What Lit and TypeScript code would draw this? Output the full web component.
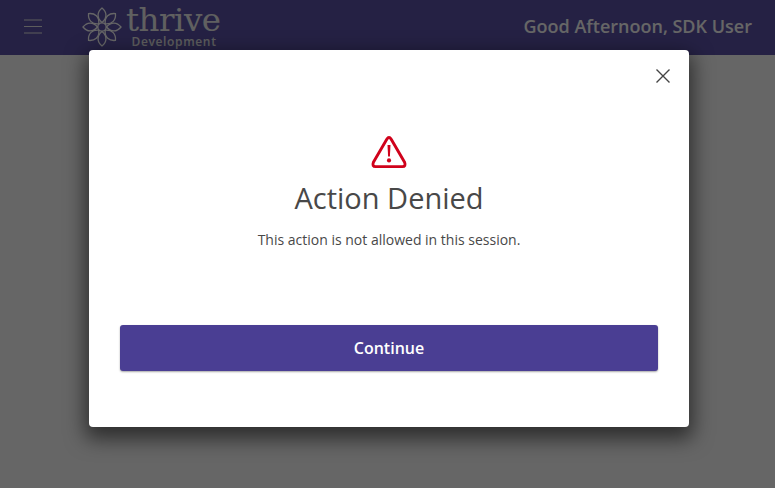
import { LitElement, html, svg, css } from "lit";
import { customElement } from "lit/decorators.js";

@customElement("app-root")
export class AppRoot extends LitElement {
  static styles = css`
    :host { display: block; width: 775px; height: 488px; position: relative; overflow: hidden; background: #fff; font-family: "Open Sans", sans-serif; }
    .header { height: 55px; background: #5c53aa; display: flex; align-items: center; padding: 0 23px 0 24px; box-sizing: border-box; color: #fff; }
    .menu { display: block; width: 18px; height: 16px; margin-right: 40px; margin-top: -3px; }
    .logo { display: flex; align-items: flex-start; height: 55px; }
    .flower { display: block; width: 40px; height: 40px; margin-top: 7px; }
    .brand { display: flex; flex-direction: column; align-items: flex-end; margin-left: 4px; }
    .word { font-family: "DejaVu Serif", serif; font-size: 32.5px; line-height: 32px; margin-top: 4px; letter-spacing: -0.5px; font-weight: 400; color: #f0f0f0; }
    .sub { font-size: 12px; line-height: 12px; letter-spacing: 0.65px; font-weight: 600; margin-top: 0; margin-right: 4px; color: #e8e8e8; }
    .greet { margin-left: auto; font-size: 18px; font-weight: 600; margin-top: -3px; }
    .backdrop { position: absolute; inset: 0; background: rgba(0,0,0,.6); display: flex; justify-content: center; align-items: flex-start; padding: 50px 0 0 3px; box-sizing: border-box; }
    .modal { width: 600px; height: 377px; background: #fff; border-radius: 4px; box-shadow: 0 8px 20px 4px rgba(0,0,0,.55); padding: 0 31px; box-sizing: border-box; display: flex; flex-direction: column; align-items: center; color: #444; position: relative; }
    .close { position: absolute; top: 19px; right: 19px; width: 14px; height: 14px; display: block; }
    .warn { display: block; width: 36px; height: 34px; margin-top: 85px; }
    h1 { font-size: 29px; font-weight: 400; line-height: 38px; margin: 10px 0 0; color: #484848; }
    p { font-size: 14px; line-height: 20px; margin: 13px 0 0; color: #484848; }
    button { margin-top: 75px; width: 538px; height: 46px; border: 0; border-radius: 3px; background: #4a3e93; color: #fff; font: 600 16px "Open Sans", sans-serif; box-shadow: 0 1px 2px rgba(0,0,0,.35); padding: 0; }
  `;

  render() {
    const petals = [0, 45, 90, 135, 180, 225, 270, 315];
    return html`
      <div class="header">
        <svg class="menu" viewBox="0 0 18 16" fill="none" stroke="#e8e8e8" stroke-width="1.2">
          <path d="M0 2h18M0 8.5h18M0 15h18" />
        </svg>
        <div class="logo">
          <svg class="flower" viewBox="0 0 40 40" fill="none" stroke="#fff" stroke-width="1.3">
            <circle cx="20" cy="20" r="4.2" />
            ${petals.map(
              (a) => svg`<path transform="rotate(${a} 20 20)" d="M20 15.5C14.5 11 15 5 20 1C25 5 25.5 11 20 15.5Z" />`
            )}
          </svg>
          <div class="brand">
            <span class="word">thrive</span>
            <span class="sub">Development</span>
          </div>
        </div>
        <div class="greet">Good Afternoon, SDK User</div>
      </div>
      <div class="backdrop">
        <div class="modal">
          <svg class="close" viewBox="0 0 14 14" stroke="#444" stroke-width="1.4" fill="none">
            <path d="M0.5 0.5L13.5 13.5M13.5 0.5L0.5 13.5" />
          </svg>
          <svg class="warn" viewBox="0 0 36 34" fill="none" stroke="#d0021b" stroke-width="2.9" stroke-linejoin="round">
            <path d="M15.8 4.2Q18 0.8 20.2 4.2L33.6 27.3Q35.2 31.6 31.4 31.6H4.6Q0.8 31.6 2.4 27.3Z" />
            <path d="M16.5 10h3l-0.6 11.5h-1.8Z" fill="#d0021b" stroke="none" />
            <circle cx="18" cy="25.4" r="2.1" fill="#d0021b" stroke="none" />
          </svg>
          <h1>Action Denied</h1>
          <p>This action is not allowed in this session.</p>
          <button>Continue</button>
        </div>
      </div>
    `;
  }
}
